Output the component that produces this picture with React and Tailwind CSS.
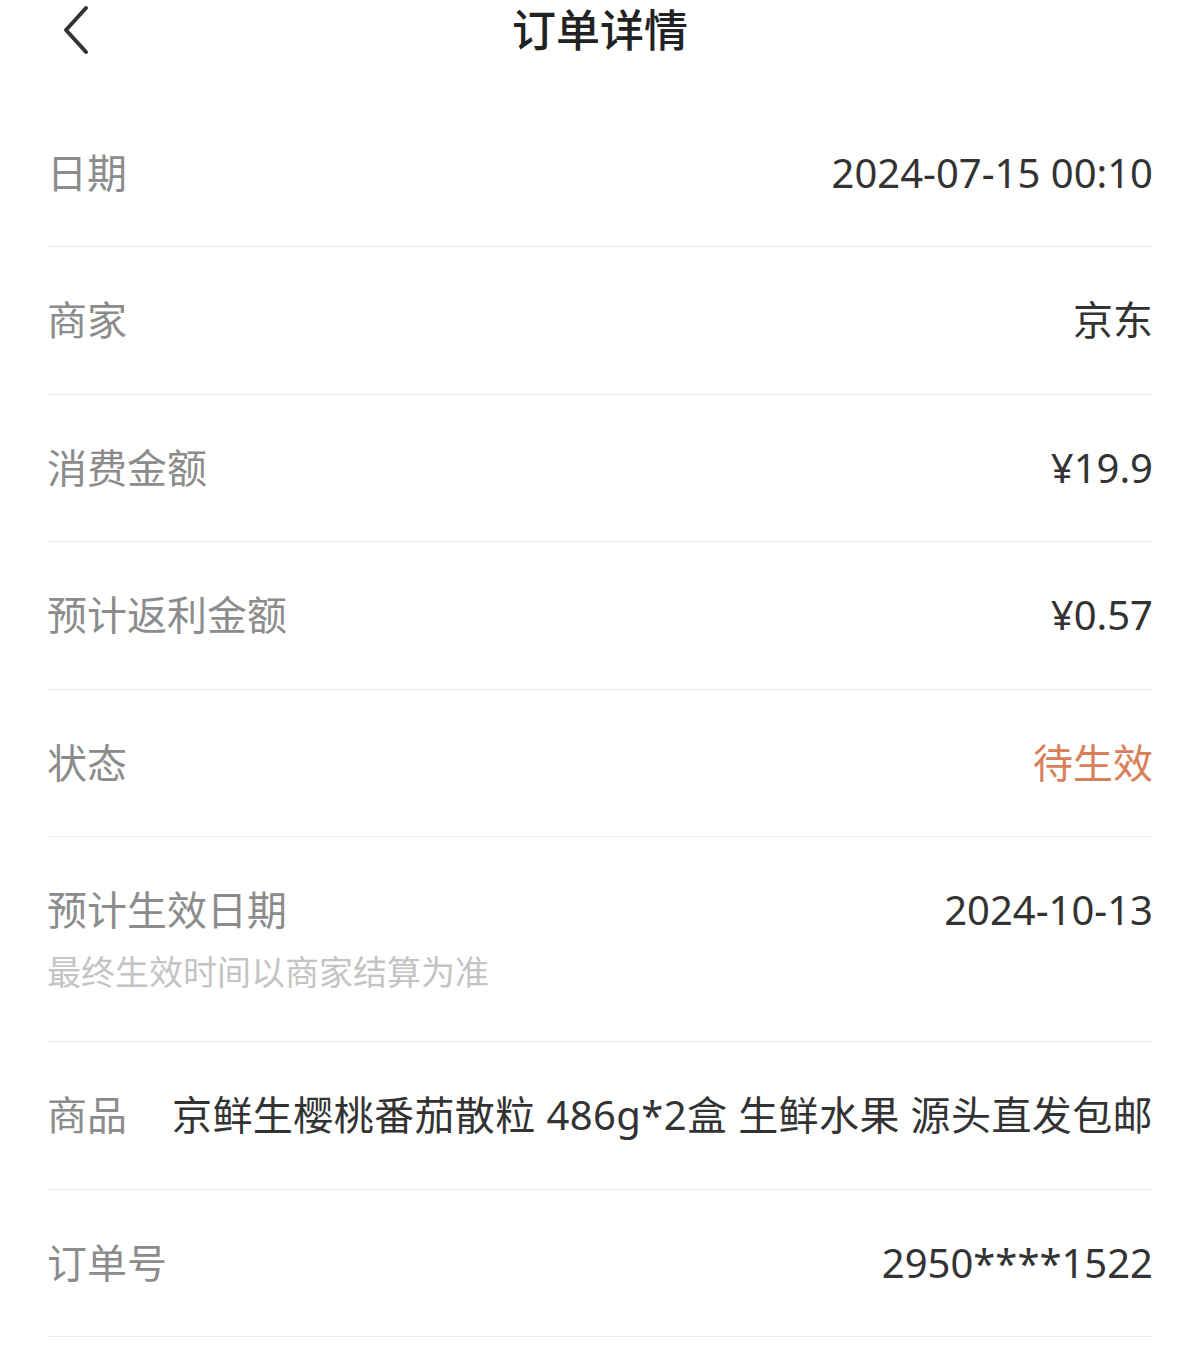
import React from "react";

const F = { fontFamily: '"Noto Sans", "Noto Sans CJK SC", sans-serif' };

function Row({ label, value, valueClass = "text-[#333333]" }) {
  return (
    <div className="flex h-[147.5px] items-center justify-between border-b border-[#ebebeb]">
      <span className="text-[40px] leading-[40px] text-[#8c8c8c]">{label}</span>
      <span className={"text-[40px] leading-[40px] " + valueClass}>{value}</span>
    </div>
  );
}

export default function App() {
  return (
    <div className="min-h-[1367px] w-[1200px] bg-white" style={F}>
      <div className="relative flex h-[60px] items-center justify-center">
        <svg
          className="absolute left-[58px] top-[3px]"
          width="36"
          height="54"
          viewBox="0 0 36 54"
        >
          <polyline
            points="28,5 8,27 28,49"
            fill="none"
            stroke="#333333"
            strokeWidth="4"
            strokeLinecap="round"
            strokeLinejoin="round"
          />
        </svg>
        <span className="text-[44px] leading-[44px] text-[#222222] font-medium">订单详情</span>
      </div>
      <div className="mx-[47px] mt-[39.5px]">
        <Row label="日期" value="2024-07-15 00:10" />
        <Row label="商家" value="京东" />
        <Row label="消费金额" value="¥19.9" />
        <Row label="预计返利金额" value="¥0.57" />
        <Row label="状态" value="待生效" valueClass="text-[#d9805a]" />
        <div className="flex h-[205px] flex-col border-b border-[#ebebeb] pt-[53px]">
          <div className="flex items-center justify-between">
            <span className="text-[40px] leading-[40px] text-[#8c8c8c]">预计生效日期</span>
            <span className="text-[40px] leading-[40px] text-[#333333]">2024-10-13</span>
          </div>
          <span className="mt-[22px] text-[34px] leading-[40px] text-[#c4c4c4]">最终生效时间以商家结算为准</span>
        </div>
        <div className="flex h-[147.5px] items-center justify-between border-b border-[#ebebeb]">
          <span className="shrink-0 text-[40px] leading-[40px] text-[#8c8c8c]">商品</span>
          <span className="ml-[40px] flex-1 whitespace-nowrap text-right text-[40px] leading-[40px] tracking-[0.4px] text-[#333333]">
            京鲜生樱桃番茄散粒 486g*2盒 生鲜水果 源头直发包邮
          </span>
        </div>
        <Row label="订单号" value="2950****1522" />
      </div>
    </div>
  );
}
